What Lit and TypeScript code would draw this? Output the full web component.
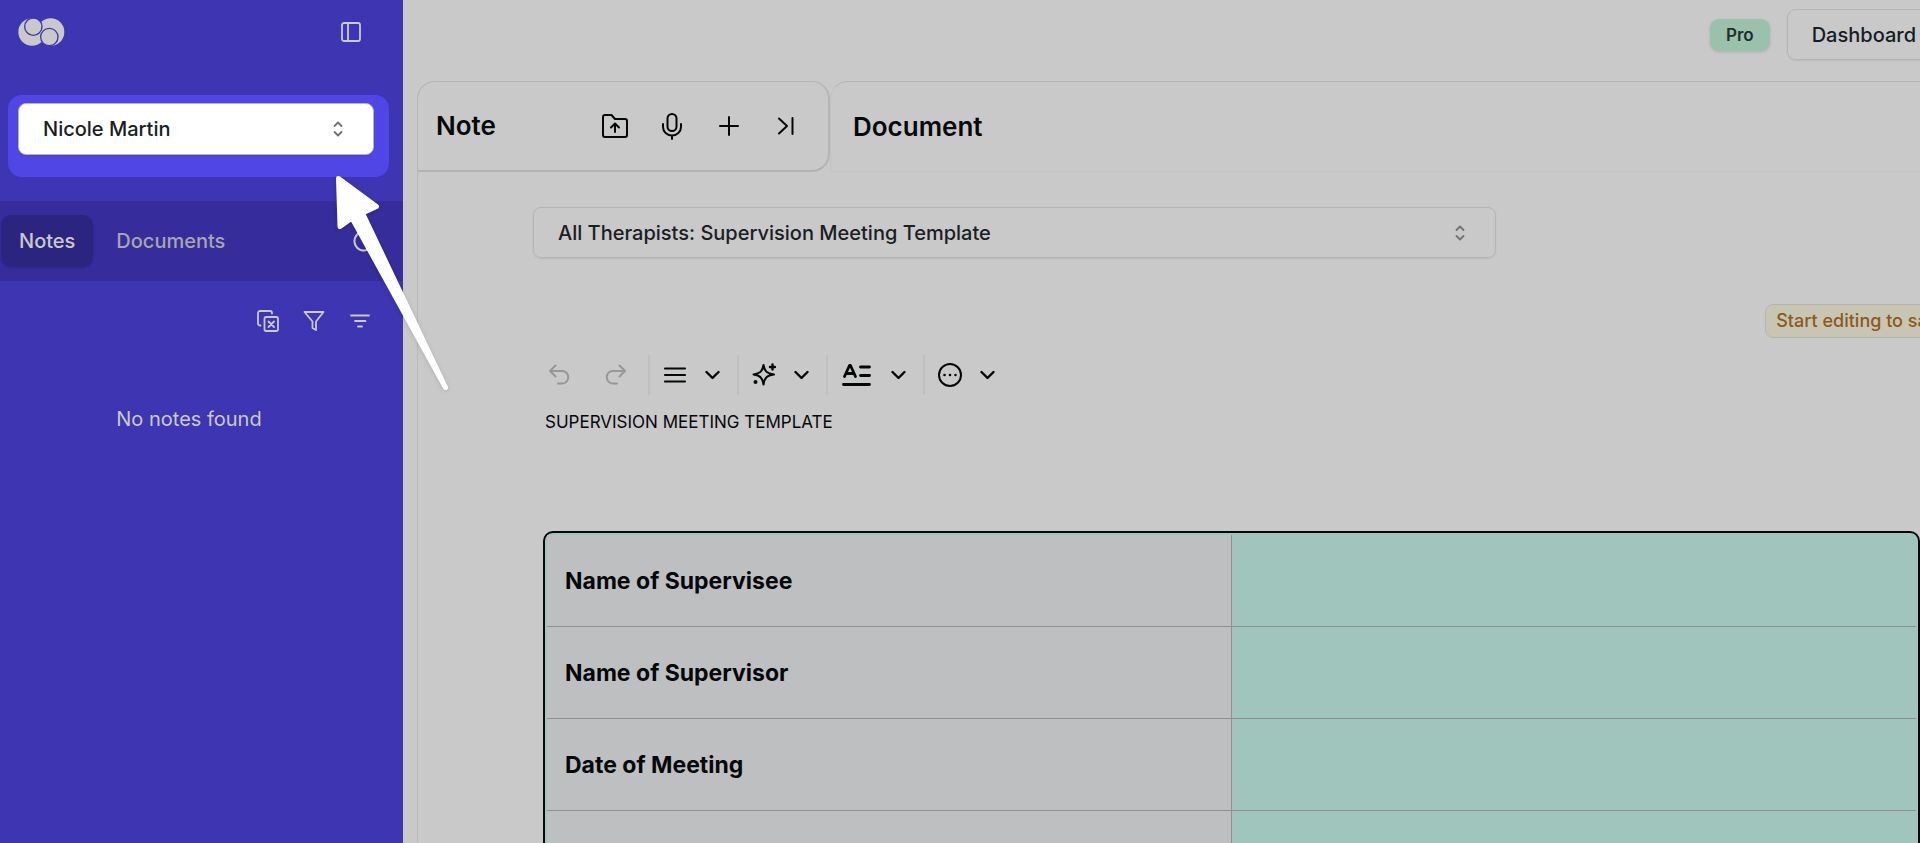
import { LitElement, html, css, svg } from "lit";
import { customElement, state } from "lit/decorators.js";
import { classMap } from "lit/directives/class-map.js";

const stroke = (w: number, h: number, body: unknown, cls = "") => html`
  <svg class="icon ${cls}" width=${w} height=${h} viewBox="0 0 ${w} ${h}" aria-hidden="true">${body}</svg>
`;

const icons = {
  logo: html`<svg width="47" height="28" viewBox="0 0 141 84" aria-hidden="true">
    <g class="logo-fill"><circle cx="42" cy="42" r="41" /><circle cx="98" cy="42" r="41" /></g>
    <g class="logo-ring"><circle cx="46" cy="26" r="26" /><circle cx="94" cy="57" r="26" /></g>
  </svg>`,
  panel: stroke(20, 20, svg`<rect x="1" y="1" width="18" height="18" rx="2" /><path d="M7 1v18" />`),
  updown: stroke(10, 16, svg`<path d="M1.5 5 5 1.5 8.500 5M1.500 11 5 14.500 8.500 11" />`, "thin"),
  refresh: stroke(22, 22, svg`<path d="M16 3A9.500 9.500 0 1 0 20.500 11" /><path d="M16 7V2.500" />`),
  clear: stroke(22, 22, svg`<path d="M3.500 15.500H3a2 2 0 0 1-2-2V3a2 2 0 0 1 2-2h10a2 2 0 0 1 2 2v.5" /><rect x="7.500" y="7" width="13.500" height="14" rx="1.500" /><path d="m11.500 11.500 5.500 5.500M17 11.500 11.500 17" />`, "thin"),
  filter: stroke(22, 22, svg`<path d="M1.500 2h19l-7.500 9.500v8.500l-3.500-2v-6.500z" />`, "thin"),
  sort: stroke(22, 22, svg`<path d="M2 5.500h18M6 11h10.500M9 16.500h4" />`, "thin"),
  folder: stroke(28, 28, svg`<path d="M4 3h6.500l3.500 4h10a2 2 0 0 1 2 2v14a2 2 0 0 1-2 2H4a2 2 0 0 1-2-2V5a2 2 0 0 1 2-2z" /><path d="M14 20v-8M10 15.500l4-4 4 4" />`),
  mic: stroke(28, 28, svg`<rect x="9.500" y="2" width="9" height="17" rx="4.500" /><path d="M5 12v3a9 8.500 0 0 0 18 0v-3M14 23.500V27" />`),
  plus: stroke(28, 28, svg`<path d="M14 5v18M5 14h18" />`),
  skip: stroke(28, 28, svg`<path d="m7 6.500 8 7.500-8 7.500M20.500 6v16" />`),
  undo: stroke(22, 22, svg`<path d="M7.500 1.500 2 7l5.500 5.500M2 7h12.500a5.500 6 0 0 1 0 12.500H10" />`),
  redo: stroke(22, 22, svg`<path d="M14.500 1.500 20 7l-5.500 5.500M20 7H7.500a5.500 6 0 0 0 0 12.500H12" />`),
  lines: stroke(24, 24, svg`<path class="square" d="M2 5.500h20M2 12h20M2 18.500h20" />`),
  chevron: stroke(16, 16, svg`<path class="bold" d="m1.500 5 6 6L13.500 5" />`),
  sparkle: stroke(24, 24, svg`<path d="M11.500 2c1 6 3 8.500 10.500 9.500-7.500 1-9.500 3.500-10.500 10-1-6.500-3-9-10-10 7-1 9-3.500 10-9.500z" /><path class="bold" d="M20.500 1.500v5M18 4h5" /><circle class="dot" cx="3.500" cy="19" r="2" />`),
  format: stroke(32, 24, svg`<path class="heavy" d="M3.500 13.500 8.500 2.500h1l5 11M5.500 10.500h7M19.500 4h9M19.500 12.500h9M2.500 21.500h26" />`),
  more: stroke(24, 24, svg`<circle cx="12" cy="12" r="11" /><circle class="dot" cx="6.500" cy="12" r="1.300" /><circle class="dot" cx="12" cy="12" r="1.300" /><circle class="dot" cx="17.500" cy="12" r="1.300" />`),
};

const iconStyles = css`
  * { box-sizing: border-box; }
  button, select { font: inherit; color: inherit; background: none; border: 0; margin: 0; padding: 0; cursor: pointer; }
  svg { display: block; }
  .icon { fill: none; stroke: currentColor; stroke-width: 2; stroke-linecap: round; stroke-linejoin: round; }
  .icon.thin { stroke-width: 1.8; }
  .bold { stroke-width: 2.4; }
  .heavy { stroke-width: 2.8; }
  .square { stroke-width: 2.2; }
  .dot { fill: currentColor; stroke: none; }
  .select { position: relative; display: flex; align-items: center; height: 52px; border: 1px solid #b3b6b7; border-radius: 8px; font-size: 20px; font-weight: 500; color: #182024; box-shadow: 0 1px 2px rgb(0 0 0 / 8%); }
  .select select { appearance: none; width: 100%; height: 100%; padding: 0 56px 0 24px; border-radius: 8px; }
  .select .icon { position: absolute; right: 30px; color: #6f7375; pointer-events: none; }
`;

@customElement("side-bar")
class SideBar extends LitElement {
  @state() private tab = "Notes";

  static styles = [iconStyles, css`
    :host { display: block; flex: 0 0 403px; background: #3d35b2; color: #cacaca; font-size: 20px; line-height: 28px; }
    .head { display: flex; justify-content: space-between; align-items: flex-start; height: 95px; padding: 18px 42px 0 18px; }
    .head button { padding-top: 4px; }
    .head .icon { stroke-width: 1.8; }
    .logo-fill { fill: #c9c9c9; }
    .logo-ring { fill: #c9c9c9; stroke: #3d35b2; stroke-width: 4; }
    .picker { margin: 0 14px 24px 8px; padding: 8px 15px 22px 10px; border-radius: 14px; background: #5046e5; }
    .picker .select { background: #fff; }
    .tabs { display: flex; align-items: center; gap: 5px; height: 80px; padding: 0 28px 0 1px; background: #362c9c; }
    .tab { height: 52px; padding: 0 18px; border-radius: 10px; font-weight: 500; color: #a6a6ab; }
    .tab.active { background: #2c257f; color: #cacaca; box-shadow: 0 1px 2px rgb(0 0 0 / 12%); }
    .refresh { margin-left: auto; }
    .tools { display: flex; justify-content: flex-end; align-items: center; gap: 24px; height: 80px; padding-right: 32px; }
    .empty { margin: 44px 25px 0 0; text-align: center; }
  `];

  render() {
    return html`
      <header class="head">
        ${icons.logo}
        <button aria-label="Collapse sidebar">${icons.panel}</button>
      </header>
      <div class="picker">
        <label class="select">
          <select aria-label="Client"><option>Nicole Martin</option></select>
          ${icons.updown}
        </label>
      </div>
      <nav class="tabs">
        ${["Notes", "Documents"].map((t) => html`
          <button class=${classMap({ tab: true, active: this.tab === t })} @click=${() => (this.tab = t)}>${t}</button>
        `)}
        <button class="refresh" aria-label="Refresh">${icons.refresh}</button>
      </nav>
      <div class="tools">
        <button aria-label="Clear selection">${icons.clear}</button>
        <button aria-label="Filter">${icons.filter}</button>
        <button aria-label="Sort">${icons.sort}</button>
      </div>
      <p class="empty">No notes found</p>
    `;
  }
}

@customElement("document-editor")
class DocumentEditor extends LitElement {
  private rows = ["Name of Supervisee", "Name of Supervisor", "Date of Meeting", ""];

  static styles = [iconStyles, css`
    :host { display: block; padding: 35px 0 0 115px; }
    .template { width: 100%; max-width: 963px; height: 51px; }
    .status { display: flex; justify-content: flex-end; margin: 46px -39px 17px 0; }
    .hint { height: 34px; padding: 0 10px; border: 1px solid #b3b5ac; border-radius: 8px; background: #c8c6b3; color: #8a5a1c; font-size: 18px; font-weight: 500; line-height: 32px; white-space: nowrap; }
    .toolbar { display: flex; align-items: center; height: 40px; color: #050808; }
    .group { display: flex; align-items: center; height: 40px; gap: 18px; padding: 0 16px 0 13px; border-left: 2px solid #bfc0c0; }
    .group.history { gap: 35px; padding: 0 21px 0 15px; border: 0; color: #969898; }
    .title { margin: 13px 0 95px 12px; color: #050808; font-size: 17px; font-weight: 400; line-height: 28px; }
    .frame { margin-left: 10px; padding: 2px; border: 2px solid #050808; border-radius: 10px; background: #a0c5bc; }
    table { width: 100%; table-layout: fixed; border-collapse: separate; border-spacing: 0; }
    th, td { height: 92px; padding: 0 18px; border-bottom: 1px solid #8f9091; }
    th { border-right: 1px solid #8f9091; background: #bebfc1; color: #050808; font-size: 23px; font-weight: 700; text-align: left; }
  `];

  private group(label: string, icon: unknown) {
    return html`<div class="group">
      <button aria-label=${label}>${icon}</button>
      <button aria-label="${label} options">${icons.chevron}</button>
    </div>`;
  }

  render() {
    return html`
      <label class="select template">
        <select aria-label="Template"><option>All Therapists: Supervision Meeting Template</option></select>
        ${icons.updown}
      </label>
      <div class="status"><span class="hint">Start editing to save</span></div>
      <div class="toolbar" role="toolbar">
        <div class="group history">
          <button aria-label="Undo">${icons.undo}</button>
          <button aria-label="Redo">${icons.redo}</button>
        </div>
        ${this.group("Align", icons.lines)}
        ${this.group("Assist", icons.sparkle)}
        ${this.group("Format", icons.format)}
        ${this.group("More", icons.more)}
      </div>
      <h3 class="title">SUPERVISION MEETING TEMPLATE</h3>
      <div class="frame">
        <table>
          <tbody>
            ${this.rows.map((r) => html`<tr><th scope="row">${r}</th><td></td></tr>`)}
          </tbody>
        </table>
      </div>
    `;
  }
}

@customElement("app-root")
class AppRoot extends LitElement {
  static styles = [iconStyles, css`
    :host { position: relative; display: flex; height: 100vh; overflow: hidden; background: #c9c9c9; font-family: Inter, "Liberation Sans", sans-serif; }
    .main { flex: 1; min-width: 0; padding-left: 14px; }
    .top { display: flex; justify-content: flex-end; align-items: flex-start; gap: 17px; height: 81px; margin-right: -21px; padding-top: 9px; }
    .plan { margin-top: 10px; padding: 0 16px; border-radius: 9px; background: #99c1ac; color: #22302c; font-size: 17px; font-weight: 600; line-height: 32px; box-shadow: 0 1px 3px rgb(0 0 0 / 14%); }
    .dash { height: 51px; padding: 0 24px; border: 1px solid #b3b6b7; border-radius: 9px; color: #141c26; font-size: 20px; font-weight: 500; line-height: 51px; box-shadow: 0 1px 2px rgb(0 0 0 / 8%); }
    .sheet { border-left: 1px solid #b6b8b9; border-top-left-radius: 18px; }
    .heads { display: flex; height: 91px; }
    h2 { margin: 0; color: #050808; font-size: 26px; font-weight: 600; line-height: 32px; }
    .note { display: flex; align-items: center; justify-content: space-between; flex: 0 0 413px; height: 91px; margin-left: -1px; padding: 0 28px 0 18px; border: 1px solid #b3b6b7; border-right-width: 2px; border-bottom: 2px solid #b0b3b5; border-radius: 18px 18px 18px 0; color: #050808; }
    .actions { display: flex; gap: 29px; }
    .doc { display: flex; align-items: center; flex: 1; padding-left: 22px; border-top: 1px solid #b3b6b7; border-left: 1px solid #c1c3c3; border-bottom: 1px solid #c4c5c5; border-top-left-radius: 18px; }
    .pointer { position: absolute; left: 330px; top: 170px; fill: #fff; stroke: #fff; stroke-width: 5; stroke-linejoin: round; filter: drop-shadow(0 1px 2px rgb(0 0 0 / 12%)); pointer-events: none; }
  `];

  render() {
    return html`
      <side-bar></side-bar>
      <main class="main">
        <div class="top">
          <span class="plan">Pro</span>
          <button class="dash">Dashboard</button>
        </div>
        <section class="sheet">
          <div class="heads">
            <div class="note">
              <h2>Note</h2>
              <div class="actions">
                <button aria-label="Upload">${icons.folder}</button>
                <button aria-label="Record">${icons.mic}</button>
                <button aria-label="Add">${icons.plus}</button>
                <button aria-label="Collapse">${icons.skip}</button>
              </div>
            </div>
            <div class="doc"><h2>Document</h2></div>
          </div>
          <document-editor></document-editor>
        </section>
      </main>
      <svg class="pointer" width="130" height="230" viewBox="0 0 130 230" aria-hidden="true">
        <path d="M8.500 8.500 46.500 36.500 32.500 43 115.500 217.500 22 48 10 56.500z" />
      </svg>
    `;
  }
}
